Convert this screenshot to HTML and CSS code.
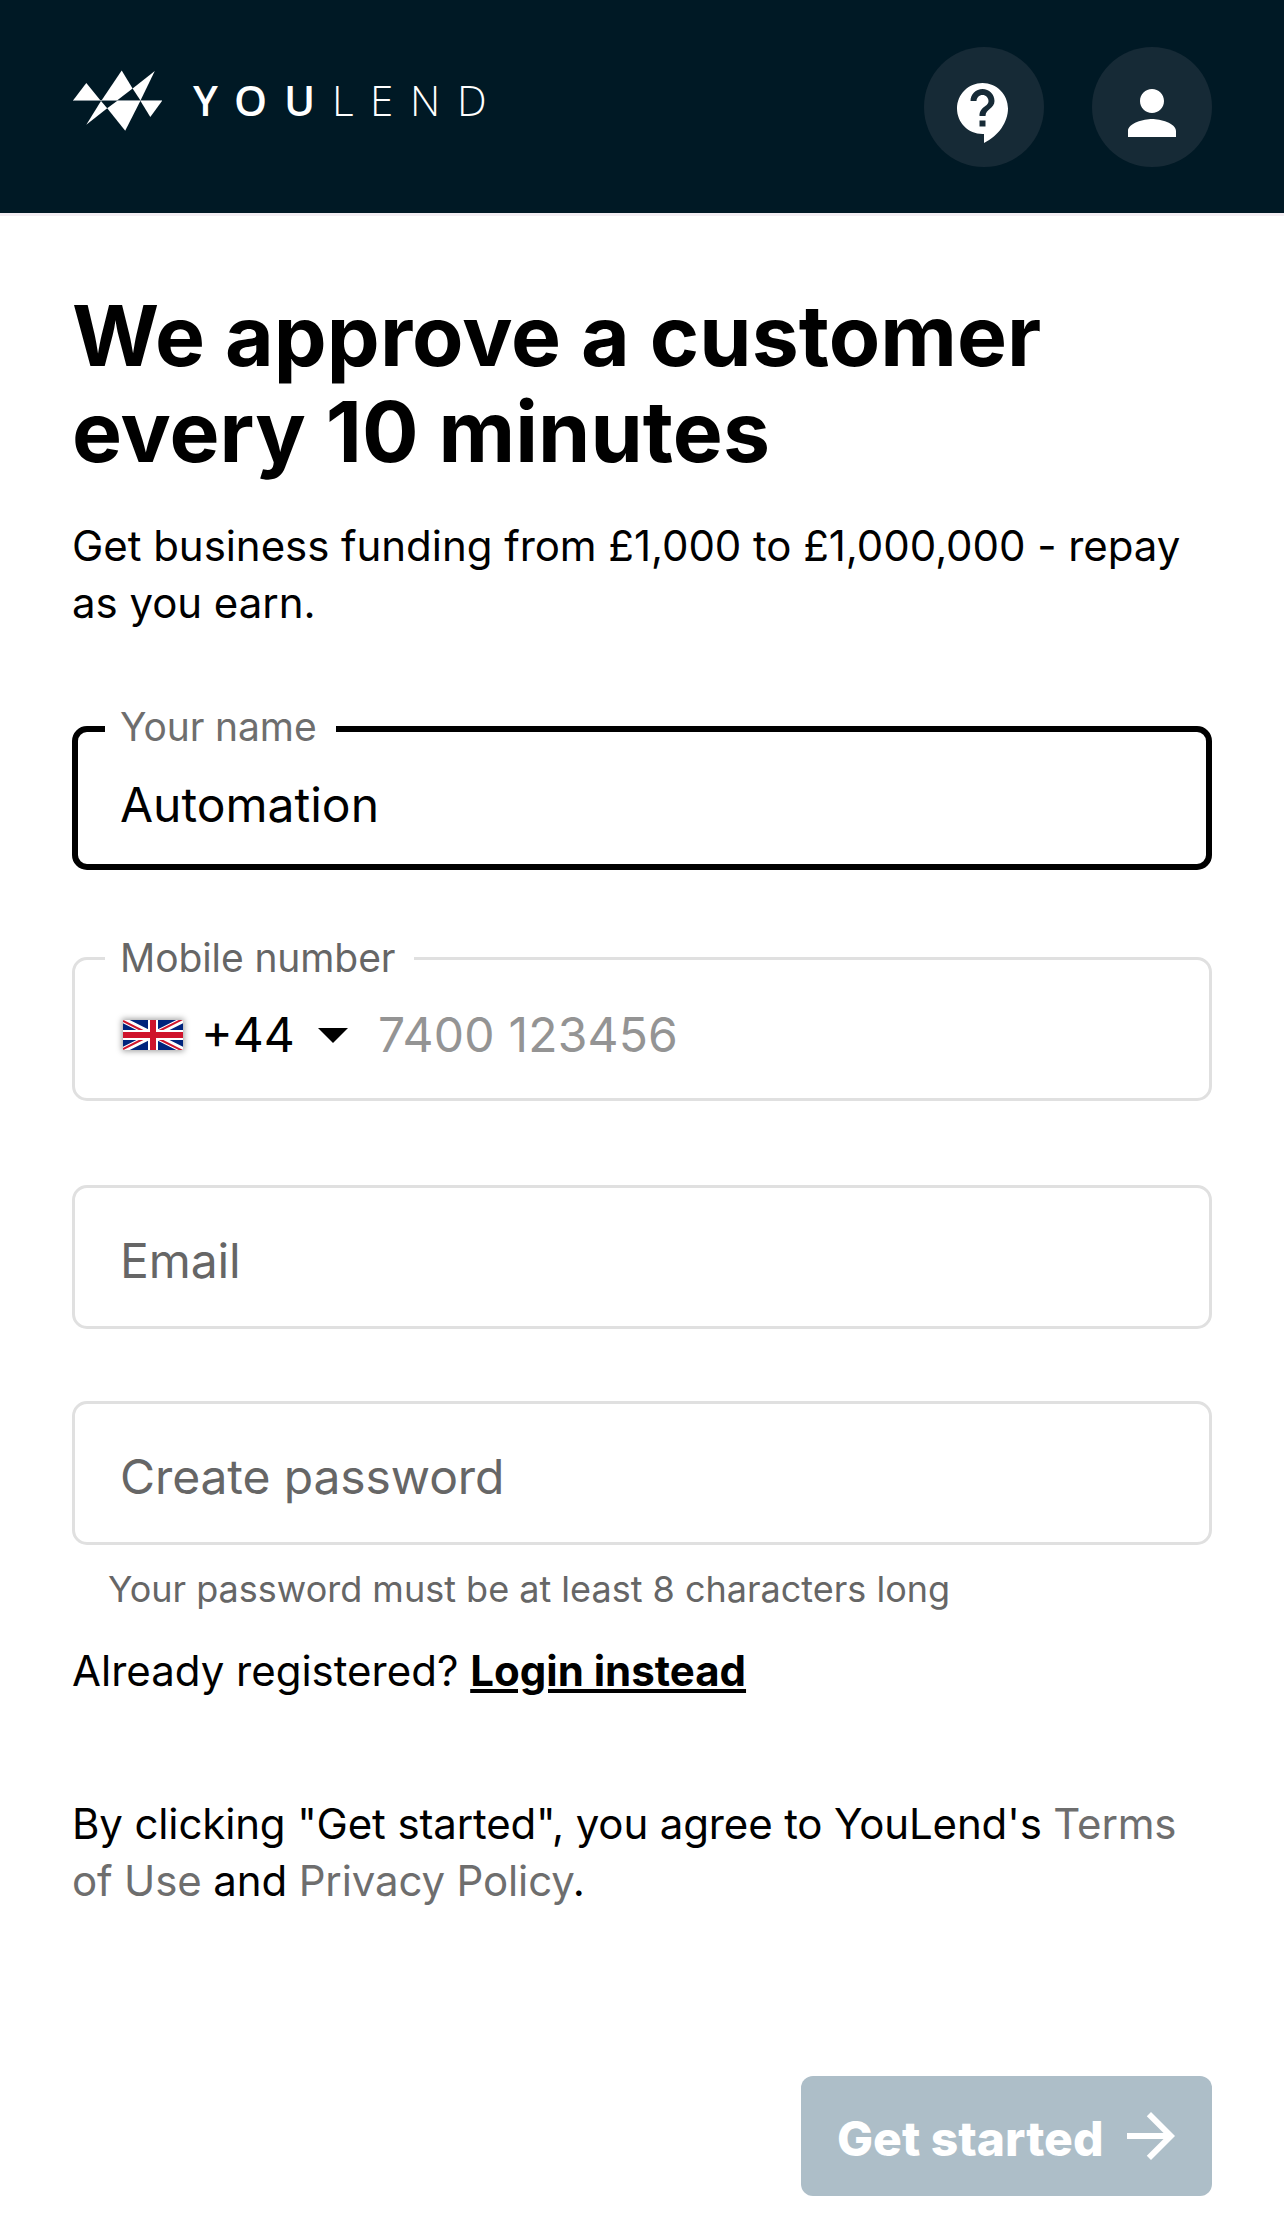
FILE: index.html
```html
<!DOCTYPE html>
<html lang="en">
<head>
<meta charset="utf-8">
<title>YouLend</title>
<link rel="stylesheet" href="styles.css">
</head>
<body>
<header class="header">
  <svg class="logo" width="420" height="66" viewBox="0 0 420 66" role="img" aria-label="YouLend">
    <g fill="#fff">
      <path d="M1 30.5 14.3 13 28.5 30.5z"/>
      <path d="M29.5 30.5 49.7 0.5 60.6 18.5 45 30.5z"/>
      <path d="M60.6 18.5 82.8 1 68.5 30.5z"/>
      <path d="M14.3 54.7 29 31 35.2 38.3z"/>
      <path d="M35.2 38.3 45 31 68.3 31 53.2 60.7z"/>
      <path d="M68.5 31H90L78.3 47z"/>
    </g>
    <path d="M1 30.5H90" stroke="#8b979e" stroke-width="1"/>
    <text class="word-bold" y="46" x="121 162 212">YOU</text>
    <text class="word-light" y="46" x="260 298 338 385">LEND</text>
  </svg>
  <nav class="actions">
    <button class="round" aria-label="Help"><svg viewBox="0 0 24 24"><path d="M11.5 2C6.81 2 3 5.81 3 10.5S6.81 19 11.5 19h.5v3c4.86-2.34 8-7 8-11.5C20 5.81 16.19 2 11.5 2zm1 14.5h-2v-2h2v2zm0-3.5h-2c0-3.25 3-3 3-5 0-1.1-.9-2-2-2s-2 .9-2 2h-2c0-2.21 1.79-4 4-4s4 1.79 4 4c0 2.5-3 2.75-3 5z"/></svg></button>
    <button class="round" aria-label="Account"><svg viewBox="0 0 24 24"><path d="M12 12c2.21 0 4-1.79 4-4s-1.79-4-4-4-4 1.79-4 4 1.79 4 4 4zm0 2c-2.67 0-8 1.34-8 4v2h16v-2c0-2.66-5.33-4-8-4z"/></svg></button>
  </nav>
</header>
<main class="main">
  <h1 class="title">We approve a customer every 10 minutes</h1>
  <p class="lead">Get business funding from £1,000 to £1,000,000 - repay as you earn.</p>
  <form class="form">
    <fieldset class="field focused">
      <legend class="legend name">Your name</legend>
      <div class="value">Automation</div>
    </fieldset>
    <fieldset class="field phone">
      <legend class="legend mobile">Mobile number</legend>
      <div class="value">
        <svg class="flag" viewBox="0 0 60 30">
          <path fill="#00247d" d="M0 0h60v30H0z"/>
          <path d="M0 0 60 30M60 0 0 30" stroke="#fff" stroke-width="6"/>
          <path d="M0 0 30 15M60 30 30 15" stroke="#cf142b" stroke-width="2" transform="translate(0 1)"/>
          <path d="M60 0 30 15M0 30 30 15" stroke="#cf142b" stroke-width="2" transform="translate(0 -1)"/>
          <path d="M30 0v30M0 15h60" stroke="#fff" stroke-width="10"/>
          <path d="M30 0v30M0 15h60" stroke="#cf142b" stroke-width="6"/>
        </svg>
        <span class="code">+44</span>
        <svg class="caret" viewBox="0 0 30 15"><path d="M0 0h30L15 15z"/></svg>
        <span class="hint">7400 123456</span>
      </div>
    </fieldset>
    <div class="field plain email">Email</div>
    <div class="field plain password">Create password</div>
    <p class="helper">Your password must be at least 8 characters long</p>
    <p class="login">Already registered? <a class="login-link" href="#">Login instead</a></p>
    <p class="terms">By clicking "Get started", you agree to YouLend's <a class="soft" href="#">Terms of Use</a> and <a class="soft" href="#">Privacy Policy</a>.</p>
    <button class="submit" type="button">
      <span class="submit-text">Get started</span>
      <svg viewBox="0 0 24 24"><path d="m12 4-1.41 1.41L16.17 11H4v2h12.17l-5.58 5.59L12 20l8-8z"/></svg>
    </button>
  </form>
</main>
</body>
</html>
```
FILE: styles.css
```css
* { box-sizing: border-box; }
body {
  margin: 0;
  background: #fff;
  color: #000;
  font-family: Inter, sans-serif;
  font-optical-sizing: none;
}
h1, p { margin: 0; }
button { border: 0; font-family: inherit; }
.header {
  display: flex;
  justify-content: space-between;
  align-items: flex-start;
  height: 216px;
  padding: 47px 72px 0;
  background: #001925;
  border-bottom: 3px solid #f3edf2;
}
.logo { margin-top: 23px; overflow: visible; }
.word-bold, .word-light {
  fill: #fff;
  font-family: "Open Sans", sans-serif;
  font-size: 42px;
}
.word-bold { font-weight: 600; }
.word-light { font-weight: 300; }
.actions { display: flex; gap: 48px; }
.round {
  width: 120px;
  height: 120px;
  padding: 12px 0 0;
  border-radius: 50%;
  background: #162a36;
}
.round svg { display: block; width: 72px; height: 72px; margin: 0 auto; fill: #fff; }
.main { padding: 72px 72px 0; }
.title {
  font-size: 84px;
  font-weight: 750;
  line-height: 96px;
  letter-spacing: 0.05px;
}
.lead {
  margin-top: 37px;
  font-size: 42px;
  line-height: 57px;
  letter-spacing: -0.05px;
}
.form { display: flex; flex-direction: column; margin-top: 77px; }
.field {
  width: 100%;
  min-width: 0;
  height: 144px;
  margin: 0;
  border: 3px solid #e0e0e0;
  border-radius: 15px;
  font-size: 48px;
}
fieldset.focused { height: 162px; border: 6px solid #000; padding: 0 42px; }
fieldset.phone { height: 164px; margin-top: 67px; padding: 0 45px; }
.legend {
  margin-left: -15px;
  padding: 0 15px;
  font-size: 39px;
  letter-spacing: -0.1px;
  white-space: nowrap;
}
.name { width: 231px; height: 42px; line-height: 37px; color: #6e6e6e; }
.mobile { width: 309px; height: 43px; line-height: 42px; color: #666; }
.value { display: flex; align-items: center; height: 72px; margin-top: 19px; line-height: 72px; }
.flag { width: 60px; height: 30px; margin-left: 3px; box-shadow: 0 0 6px 1px rgba(0,0,0,.4); }
.code { width: 99px; margin-left: 18px; }
.caret { width: 30px; height: 15px; margin-left: 18px; }
.hint { margin-left: 30px; color: #949494; letter-spacing: 0.2px; }
.plain { padding: 7px 45px 0; line-height: 132px; color: #666; letter-spacing: -0.1px; }
.email { margin-top: 84px; }
.password { margin-top: 72px; }
.helper {
  margin: 17px 0 0 36px;
  font-size: 36px;
  line-height: 54px;
  color: #666;
}
.login {
  margin-top: 26px;
  font-size: 42px;
  line-height: 57px;
}
.login-link { color: #000; font-weight: 700; }
.terms {
  margin-top: 96px;
  font-size: 42px;
  line-height: 57px;
  letter-spacing: -0.14px;
}
.soft { color: #6e6e6e; text-decoration: none; }
.submit {
  display: flex;
  align-items: center;
  justify-content: space-between;
  align-self: flex-end;
  width: 411px;
  height: 120px;
  margin-top: 167px;
  padding: 0 25px 0 36px;
  border-radius: 12px;
  background: #adbec8;
  color: #fff;
  font-size: 48px;
  font-weight: 800;
}
.submit-text { padding-top: 4px; }
.submit svg { width: 72px; height: 72px; fill: #fff; }
```
